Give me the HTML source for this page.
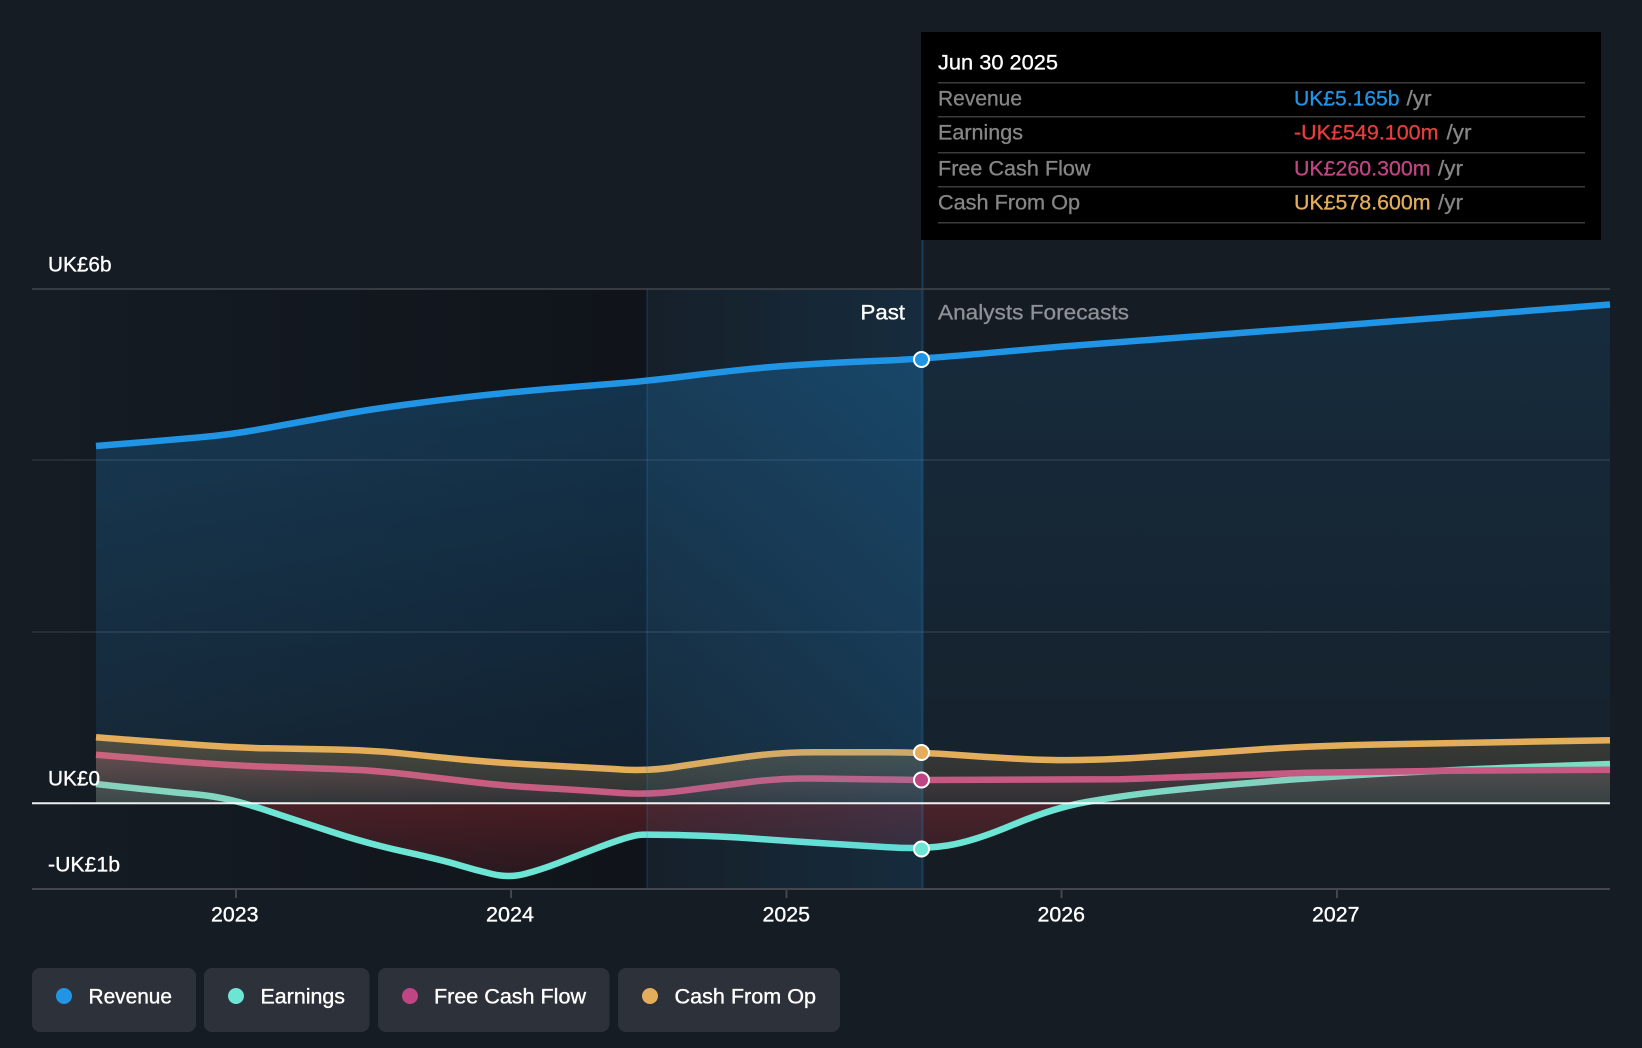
<!DOCTYPE html>
<html lang="en">
<head>
<meta charset="utf-8">
<title>Revenue and earnings chart</title>
<style>
html,body{margin:0;padding:0;background:#151c24;width:1642px;height:1048px;overflow:hidden}
svg{display:block}
text{font-family:"Liberation Sans",sans-serif;font-size:21px;fill:#fff}
.g{fill:#868686}
.m{stroke:#fff;stroke-width:.35px}
.v{stroke-width:.3px}
</style>
</head>
<body>
<svg width="1642" height="1048" viewBox="0 0 1642 1048" xmlns="http://www.w3.org/2000/svg">
<defs>
<linearGradient id="dark" x1="32" x2="647" y1="0" y2="0" gradientUnits="userSpaceOnUse"><stop offset="0" stop-color="#0f1218" stop-opacity="0"/><stop offset="1" stop-color="#0f1218" stop-opacity=".85"/></linearGradient>
<linearGradient id="band" x1="647" x2="922" y1="0" y2="0" gradientUnits="userSpaceOnUse"><stop offset="0" stop-color="#1f94e6" stop-opacity=".03"/><stop offset="1" stop-color="#1f94e6" stop-opacity=".13"/></linearGradient>
<linearGradient id="revP" x1="0" x2="0" y1="350" y2="803" gradientUnits="userSpaceOnUse"><stop offset="0" stop-color="#1f94e6" stop-opacity=".26"/><stop offset="1" stop-color="#1f94e6" stop-opacity=".09"/></linearGradient>
<linearGradient id="revF" x1="0" x2="0" y1="300" y2="803" gradientUnits="userSpaceOnUse"><stop offset="0" stop-color="#1f94e6" stop-opacity=".13"/><stop offset="1" stop-color="#1f94e6" stop-opacity=".04"/></linearGradient>
<linearGradient id="red" x1="0" x2="0" y1="803" y2="880" gradientUnits="userSpaceOnUse"><stop offset="0" stop-color="#e8353a" stop-opacity=".26"/><stop offset="1" stop-color="#e8353a" stop-opacity=".1"/></linearGradient>
<linearGradient id="opP" x1="0" x2="0" y1="737" y2="803" gradientUnits="userSpaceOnUse"><stop offset="0" stop-color="#e3ad5b" stop-opacity=".28"/><stop offset="1" stop-color="#e3ad5b" stop-opacity=".12"/></linearGradient>
<linearGradient id="opF" x1="0" x2="0" y1="737" y2="803" gradientUnits="userSpaceOnUse"><stop offset="0" stop-color="#e3ad5b" stop-opacity=".17"/><stop offset="1" stop-color="#e3ad5b" stop-opacity=".1"/></linearGradient>
<linearGradient id="fc" x1="0" x2="0" y1="755" y2="803" gradientUnits="userSpaceOnUse"><stop offset="0" stop-color="#d0508f" stop-opacity=".2"/><stop offset="1" stop-color="#d0508f" stop-opacity=".02"/></linearGradient>
<linearGradient id="te" x1="0" x2="0" y1="764" y2="803" gradientUnits="userSpaceOnUse"><stop offset="0" stop-color="#6ce5d4" stop-opacity=".12"/><stop offset="1" stop-color="#6ce5d4" stop-opacity=".1"/></linearGradient>
<clipPath id="below"><rect x="32" y="803" width="1578" height="90"/></clipPath>
<clipPath id="above"><rect x="32" y="700" width="1578" height="103"/></clipPath>
<clipPath id="past"><rect x="32" y="289" width="890" height="600"/></clipPath>
<clipPath id="fore"><rect x="922" y="289" width="688" height="600"/></clipPath>
</defs>

<rect width="1642" height="1048" fill="#151c24"/>
<rect x="32" y="289" width="615" height="600" fill="url(#dark)"/>

<!-- grid -->
<path d="M32 460H1610M32 632H1610" stroke="#fff" stroke-opacity=".11" stroke-width="1.5" fill="none"/>

<!-- revenue area -->
<path clip-path="url(#past)" fill="url(#revP)" d="M96 446L133 443Q170 440 201 437.2Q232 434.5 266 428.2Q300 422 333 416Q366 410 403 405Q440 400 479 395.7Q518 391.5 551.5 388.7Q585 386 616 383.5Q647 381 683.5 376.5Q720 372 752.5 368.7Q785 365.5 817.5 363.7Q850 362 886 360.5Q922 359 991 352.8L1061 346.6L1336 325.7L1610 304.5V803H96Z"/>
<path clip-path="url(#fore)" fill="url(#revF)" d="M96 446L133 443Q170 440 201 437.2Q232 434.5 266 428.2Q300 422 333 416Q366 410 403 405Q440 400 479 395.7Q518 391.5 551.5 388.7Q585 386 616 383.5Q647 381 683.5 376.5Q720 372 752.5 368.7Q785 365.5 817.5 363.7Q850 362 886 360.5Q922 359 991 352.8L1061 346.6L1336 325.7L1610 304.5V803H96Z"/>

<!-- earnings area -->
<path clip-path="url(#below)" fill="url(#red)" d="M96 784L133 788Q170 792 198.5 794.6Q227 797.3 261 808.6Q295 820 332.5 832.1Q370 844.3 406 852.1Q442 860 458.5 865Q475 870 492 874Q509 878 524.5 874Q540 870 558.3 863Q576.6 856 593.3 849.5Q610 843 622.5 839Q635 835 641.5 834.7Q648 834.5 684 835.2Q720 836 753.3 838.5Q786.7 841 823.3 843.2Q860 845.5 891 847.4Q922 849.3 947.5 845.5Q973 841.7 1013 824.8Q1053 808 1086.5 802Q1120 796 1161.8 791.3Q1203.7 786.7 1258.8 782.2Q1314 777.7 1379.8 773.8Q1445.6 770 1527.8 767L1610 764V803H96Z"/>
<path clip-path="url(#above)" fill="url(#te)" d="M96 784L133 788Q170 792 198.5 794.6Q227 797.3 261 808.6Q295 820 332.5 832.1Q370 844.3 406 852.1Q442 860 458.5 865Q475 870 492 874Q509 878 524.5 874Q540 870 558.3 863Q576.6 856 593.3 849.5Q610 843 622.5 839Q635 835 641.5 834.7Q648 834.5 684 835.2Q720 836 753.3 838.5Q786.7 841 823.3 843.2Q860 845.5 891 847.4Q922 849.3 947.5 845.5Q973 841.7 1013 824.8Q1053 808 1086.5 802Q1120 796 1161.8 791.3Q1203.7 786.7 1258.8 782.2Q1314 777.7 1379.8 773.8Q1445.6 770 1527.8 767L1610 764V803H96Z"/>

<!-- earnings line -->
<path fill="none" stroke="#6ce5d4" stroke-width="6.5" d="M96 784L133 788Q170 792 198.5 794.6Q227 797.3 261 808.6Q295 820 332.5 832.1Q370 844.3 406 852.1Q442 860 458.5 865Q475 870 492 874Q509 878 524.5 874Q540 870 558.3 863Q576.6 856 593.3 849.5Q610 843 622.5 839Q635 835 641.5 834.7Q648 834.5 684 835.2Q720 836 753.3 838.5Q786.7 841 823.3 843.2Q860 845.5 891 847.4Q922 849.3 947.5 845.5Q973 841.7 1013 824.8Q1053 808 1086.5 802Q1120 796 1161.8 791.3Q1203.7 786.7 1258.8 782.2Q1314 777.7 1379.8 773.8Q1445.6 770 1527.8 767L1610 764"/>

<!-- FCF area + line -->
<path fill="url(#fc)" d="M96 754.7L133 757.8Q170 761 203 763.3Q235.7 765.7 268 766.8Q300 768 335 769Q370 770 405 774Q440 778 472.5 782Q505 786 542.5 788Q580 790 614 792.5Q648 795.5 684 790.5Q720 786 750 782Q780 778 815 778.5Q850 779 886 779.5L922 780L1120 779.3L1307 772.7L1450 770.8L1610 769.7V803H96Z"/>
<path fill="none" stroke="#c24d88" stroke-width="6.5" d="M96 754.7L133 757.8Q170 761 203 763.3Q235.7 765.7 268 766.8Q300 768 335 769Q370 770 405 774Q440 778 472.5 782Q505 786 542.5 788Q580 790 614 792.5Q648 795.5 684 790.5Q720 786 750 782Q780 778 815 778.5Q850 779 886 779.5L922 780L1120 779.3L1307 772.7L1450 770.8L1610 769.7"/>

<!-- Cash from op area + line -->
<path clip-path="url(#past)" fill="url(#opP)" d="M96 737.3L133 740.1Q170 743 203 745.3Q235.7 747.7 268 748.3Q300 749 335 749.5Q370 750 405 753.7Q440 757.5 472.5 760.4Q505 763.3 542.5 765.1Q580 767 614 769Q648 772 681.5 766Q715 761 747.5 756.6Q780 752.3 815 752.3L886 752.3Q922 752.3 956 754.9Q990 757.5 1025 759.1Q1060 760.7 1090 759.8Q1120 759 1165 756Q1210 753 1258.5 749.5Q1307 746 1378.5 744.5Q1450 743 1530 741.6L1610 740.3V803H96Z"/>
<path clip-path="url(#fore)" fill="url(#opF)" d="M96 737.3L133 740.1Q170 743 203 745.3Q235.7 747.7 268 748.3Q300 749 335 749.5Q370 750 405 753.7Q440 757.5 472.5 760.4Q505 763.3 542.5 765.1Q580 767 614 769Q648 772 681.5 766Q715 761 747.5 756.6Q780 752.3 815 752.3L886 752.3Q922 752.3 956 754.9Q990 757.5 1025 759.1Q1060 760.7 1090 759.8Q1120 759 1165 756Q1210 753 1258.5 749.5Q1307 746 1378.5 744.5Q1450 743 1530 741.6L1610 740.3V803H96Z"/>
<path fill="none" stroke="#e3ad5b" stroke-width="6.5" d="M96 737.3L133 740.1Q170 743 203 745.3Q235.7 747.7 268 748.3Q300 749 335 749.5Q370 750 405 753.7Q440 757.5 472.5 760.4Q505 763.3 542.5 765.1Q580 767 614 769Q648 772 681.5 766Q715 761 747.5 756.6Q780 752.3 815 752.3L886 752.3Q922 752.3 956 754.9Q990 757.5 1025 759.1Q1060 760.7 1090 759.8Q1120 759 1165 756Q1210 753 1258.5 749.5Q1307 746 1378.5 744.5Q1450 743 1530 741.6L1610 740.3"/>

<!-- past band overlay -->
<rect x="647" y="289" width="275" height="600" fill="url(#band)"/>
<path d="M647 289V889" stroke="#1f94e6" stroke-opacity=".15" stroke-width="2"/>
<path d="M922.5 240V889" stroke="#1f94e6" stroke-opacity=".28" stroke-width="2"/>

<path fill="none" stroke="#2095e6" stroke-width="6.5" d="M96 446L133 443Q170 440 201 437.2Q232 434.5 266 428.2Q300 422 333 416Q366 410 403 405Q440 400 479 395.7Q518 391.5 551.5 388.7Q585 386 616 383.5Q647 381 683.5 376.5Q720 372 752.5 368.7Q785 365.5 817.5 363.7Q850 362 886 360.5Q922 359 991 352.8L1061 346.6L1336 325.7L1610 304.5"/>

<!-- axes -->
<path d="M32 289H1610" stroke="#43464d" stroke-width="1.6"/>
<path d="M32 889H1610M236 889V898M511 889V898M786.5 889V898M1061.5 889V898M1337 889V898" stroke="#43464d" stroke-width="2" fill="none"/>
<path d="M32 803.3H1610" stroke="#fff" stroke-opacity=".93" stroke-width="2"/>

<!-- markers -->
<g stroke="#fff" stroke-width="2">
<circle cx="921.5" cy="359.5" r="7.5" fill="#2095e6"/>
<circle cx="921.5" cy="752.5" r="7.5" fill="#e3ad5b"/>
<circle cx="921.5" cy="780" r="7.5" fill="#bf4583"/>
<circle cx="921.5" cy="849" r="7.5" fill="#6ce5d4"/>
</g>

<!-- axis labels -->
<text x="48" y="271.5" textLength="63.5" lengthAdjust="spacingAndGlyphs" class="v" style="stroke:#fff">UK£6b</text>
<text x="48" y="785.5" textLength="52" lengthAdjust="spacingAndGlyphs" class="v" style="stroke:#fff">UK£0</text>
<text x="48" y="871.5" textLength="72" lengthAdjust="spacingAndGlyphs" class="v" style="stroke:#fff">-UK£1b</text>
<text x="211" y="921.5" textLength="47.5" lengthAdjust="spacingAndGlyphs" class="m">2023</text>
<text x="486" y="921.5" textLength="48" lengthAdjust="spacingAndGlyphs" class="m">2024</text>
<text x="762.5" y="921.5" textLength="47.5" lengthAdjust="spacingAndGlyphs" class="m">2025</text>
<text x="1037.5" y="921.5" textLength="47.5" lengthAdjust="spacingAndGlyphs" class="m">2026</text>
<text x="1312" y="921.5" textLength="47.5" lengthAdjust="spacingAndGlyphs" class="m">2027</text>
<text x="860.5" y="319.5" textLength="44.5" lengthAdjust="spacingAndGlyphs" class="m">Past</text>
<text x="938" y="319.5" textLength="191" lengthAdjust="spacingAndGlyphs" class="v" style="fill:#8f9196;stroke:#8f9196">Analysts Forecasts</text>

<!-- tooltip -->
<rect x="921" y="32" width="680" height="208" fill="#000"/>
<path d="M938 82.7H1585M938 116.7H1585M938 152.7H1585M938 186.7H1585M938 222.7H1585" stroke="#3c3c3c" stroke-width="1.5" fill="none"/>
<text x="938" y="69.5" textLength="120" lengthAdjust="spacingAndGlyphs" class="v" style="stroke:#fff">Jun 30 2025</text>
<text x="938" y="105.5" textLength="84" lengthAdjust="spacingAndGlyphs" class="g v" style="stroke:#868686">Revenue</text>
<text x="938" y="139.5" textLength="85" lengthAdjust="spacingAndGlyphs" class="g v" style="stroke:#868686">Earnings</text>
<text x="938" y="175.5" textLength="152.5" lengthAdjust="spacingAndGlyphs" class="g v" style="stroke:#868686">Free Cash Flow</text>
<text x="938" y="209.5" textLength="142" lengthAdjust="spacingAndGlyphs" class="g v" style="stroke:#868686">Cash From Op</text>
<text x="1294" y="105.5" textLength="105.5" lengthAdjust="spacingAndGlyphs" class="v" style="fill:#2095e6;stroke:#2095e6">UK£5.165b</text>
<text x="1406.5" y="105.5" textLength="25" lengthAdjust="spacingAndGlyphs" class="g v" style="stroke:#868686">/yr</text>
<text x="1294" y="139.5" textLength="144.5" lengthAdjust="spacingAndGlyphs" class="v" style="fill:#e83d3d;stroke:#e83d3d">-UK£549.100m</text>
<text x="1446.5" y="139.5" textLength="25" lengthAdjust="spacingAndGlyphs" class="g v" style="stroke:#868686">/yr</text>
<text x="1294" y="175.5" textLength="136.5" lengthAdjust="spacingAndGlyphs" class="v" style="fill:#bf4583;stroke:#bf4583">UK£260.300m</text>
<text x="1438" y="175.5" textLength="25" lengthAdjust="spacingAndGlyphs" class="g v" style="stroke:#868686">/yr</text>
<text x="1294" y="209.5" textLength="136.5" lengthAdjust="spacingAndGlyphs" class="v" style="fill:#e3ad5b;stroke:#e3ad5b">UK£578.600m</text>
<text x="1438" y="209.5" textLength="25" lengthAdjust="spacingAndGlyphs" class="g v" style="stroke:#868686">/yr</text>

<!-- legend -->
<g fill="#2d313a">
<rect x="32" y="968" width="164" height="64" rx="8"/>
<rect x="204" y="968" width="165.5" height="64" rx="8"/>
<rect x="378" y="968" width="231.5" height="64" rx="8"/>
<rect x="618" y="968" width="222" height="64" rx="8"/>
</g>
<circle cx="64" cy="996" r="8" fill="#2095e6"/>
<circle cx="236" cy="996" r="8" fill="#6ce5d4"/>
<circle cx="410" cy="996" r="8" fill="#bf4583"/>
<circle cx="650" cy="996" r="8" fill="#e3ad5b"/>
<text x="88.5" y="1003.5" textLength="83.5" lengthAdjust="spacingAndGlyphs" class="m">Revenue</text>
<text x="260.5" y="1003.5" textLength="84.5" lengthAdjust="spacingAndGlyphs" class="m">Earnings</text>
<text x="434" y="1003.5" textLength="152" lengthAdjust="spacingAndGlyphs" class="m">Free Cash Flow</text>
<text x="674.5" y="1003.5" textLength="141.5" lengthAdjust="spacingAndGlyphs" class="m">Cash From Op</text>
</svg>
</body>
</html>
